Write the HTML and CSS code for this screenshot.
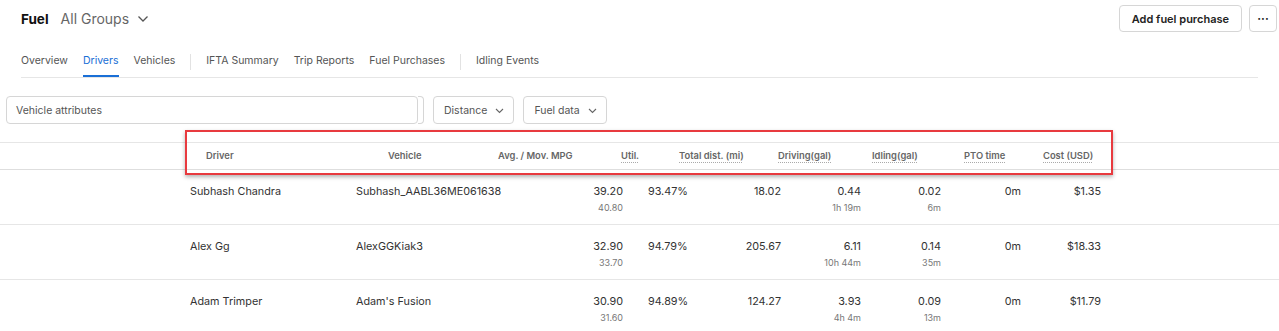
FILE: index.html
```html
<!DOCTYPE html>
<html lang="en">
<head>
    <meta charset="UTF-8">
    <meta name="viewport" content="width=device-width, initial-scale=1.0">
    <title>Fuel - Drivers</title>
    <link rel="stylesheet" href="styles.css">
</head>
<body>
    <div class="topbar">
        <div class="title">
            <span class="page-name">Fuel</span>
            <span class="group-picker">All Groups
                <svg width="12" height="8" viewBox="0 0 12 8"><path d="M1.5 1.5 L6 6 L10.5 1.5" fill="none" stroke="#555" stroke-width="1.3"/></svg>
            </span>
        </div>
        <div class="actions">
            <button class="btn">Add fuel purchase</button>
            <button class="btn btn-more">&middot;&middot;&middot;</button>
        </div>
    </div>

    <nav class="tabs">
        <a class="tab">Overview</a>
        <a class="tab active">Drivers</a>
        <a class="tab">Vehicles</a>
        <span class="tab-sep"></span>
        <a class="tab">IFTA Summary</a>
        <a class="tab">Trip Reports</a>
        <a class="tab">Fuel Purchases</a>
        <span class="tab-sep"></span>
        <a class="tab">Idling Events</a>
    </nav>

    <div class="filters">
        <div class="attr-input">
            <div class="attr-box">Vehicle attributes</div>
            <div class="attr-edge"></div>
        </div>
        <div class="dropdown">Distance
            <svg width="9" height="6" viewBox="0 0 9 6"><path d="M1 1 L4.5 4.5 L8 1" fill="none" stroke="#666" stroke-width="1.1"/></svg>
        </div>
        <div class="dropdown">Fuel data
            <svg width="9" height="6" viewBox="0 0 9 6"><path d="M1 1 L4.5 4.5 L8 1" fill="none" stroke="#666" stroke-width="1.1"/></svg>
        </div>
    </div>

    <div class="table">
        <div class="thead">
            <span>Driver</span>
            <span>Vehicle</span>
            <span>Avg. / Mov. MPG</span>
            <span class="tip">Util.</span>
            <span class="tip">Total dist. (mi)</span>
            <span class="tip">Driving(gal)</span>
            <span class="tip">Idling(gal)</span>
            <span class="tip">PTO time</span>
            <span class="tip">Cost (USD)</span>
        </div>

        <div class="trow">
            <div>Subhash Chandra</div>
            <div>Subhash_AABL36ME061638</div>
            <div class="num">39.20<div class="sub">40.80</div></div>
            <div class="util">93.47%</div>
            <div class="num">18.02</div>
            <div class="num">0.44<div class="sub">1h 19m</div></div>
            <div class="num">0.02<div class="sub">6m</div></div>
            <div class="num">0m</div>
            <div class="num">$1.35</div>
        </div>

        <div class="trow">
            <div>Alex Gg</div>
            <div>AlexGGKiak3</div>
            <div class="num">32.90<div class="sub">33.70</div></div>
            <div class="util">94.79%</div>
            <div class="num">205.67</div>
            <div class="num">6.11<div class="sub">10h 44m</div></div>
            <div class="num">0.14<div class="sub">35m</div></div>
            <div class="num">0m</div>
            <div class="num">$18.33</div>
        </div>

        <div class="trow">
            <div>Adam Trimper</div>
            <div>Adam's Fusion</div>
            <div class="num">30.90<div class="sub">31.60</div></div>
            <div class="util">94.89%</div>
            <div class="num">124.27</div>
            <div class="num">3.93<div class="sub">4h 4m</div></div>
            <div class="num">0.09<div class="sub">13m</div></div>
            <div class="num">0m</div>
            <div class="num">$11.79</div>
        </div>
    </div>

    <!-- highlight drawn over the column headers -->
    <div class="highlight"></div>
</body>
</html>
```

FILE: styles.css
```css
body {
    margin: 0;
    font-family: Inter, "Noto Sans", sans-serif;
    color: #333;
    background-color: #fff;
    position: relative;
    overflow: hidden;
}
.topbar {
    display: flex;
    justify-content: space-between;
    align-items: center;
    padding: 5px 2px 0 21px;
    height: 27px;
}
.title {
    display: flex;
    align-items: center;
    gap: 12px;
}
.page-name {
    font-size: 13.5px;
    font-weight: 700;
    color: #111;
}
.group-picker {
    display: flex;
    align-items: center;
    gap: 8px;
    font-size: 14px;
    color: #666;
}
.actions {
    display: flex;
    gap: 7px;
}
.btn {
    font-family: inherit;
    height: 27px;
    padding: 0 12px;
    font-size: 11px;
    font-weight: 600;
    color: #222;
    background-color: #fff;
    border: 1px solid #d6d6d6;
    border-radius: 4px;
}
.btn-more {
    width: 28px;
    padding: 0;
    font-size: 12px;
}
.tabs {
    display: flex;
    align-items: center;
    gap: 15px;
    margin: 12px 21px 0 21px;
    border-bottom: 1px solid #e6e6e6;
}
.tab {
    font-size: 10.5px;
    line-height: 16px;
    padding: 9px 0 6px;
    color: #555;
    border-bottom: 2px solid transparent;
}
.tab.active {
    color: #1a6fd6;
    border-bottom-color: #1a6fd6;
}
.tab-sep {
    width: 1px;
    height: 16px;
    margin-top: 2px;
    background-color: #e2e2e2;
}
.filters {
    display: flex;
    align-items: center;
    gap: 9px;
    margin: 18px 0 0 6px;
}
.attr-input {
    display: flex;
}
.attr-box {
    width: 401px;
    height: 26px;
    line-height: 27px;
    padding-left: 9px;
    font-size: 10.5px;
    color: #555;
    border: 1px solid #d6d6d6;
    border-radius: 4px;
}
.attr-edge {
    width: 5px;
    height: 26px;
    border: 1px solid #d6d6d6;
    border-left: none;
    border-radius: 0 4px 4px 0;
}
.dropdown {
    display: flex;
    align-items: center;
    gap: 8px;
    height: 25px;
    padding: 1px 9px 0 10px;
    font-size: 10.5px;
    color: #555;
    border: 1px solid #d6d6d6;
    border-radius: 4px;
}
.table {
    margin-top: 18px;
    border-top: 1px solid #e6e6e6;
}
.thead {
    display: grid;
    grid-template-columns: 182px 110px 123px 58px 99px 94px 92px 79px auto;
    padding-left: 206px;
    height: 26px;
    line-height: 26px;
    font-size: 9.4px;
    font-weight: 600;
    color: #666;
    border-bottom: 1px solid #dedede;
}
.thead span {
    justify-self: start;
}
.tip {
    text-decoration: underline dotted #aaa;
    text-underline-offset: 3px;
}
.trow {
    display: grid;
    grid-template-columns: 166px 187px 80px 78px 80px 80px 80px 80px 80px;
    padding-left: 190px;
    height: 39px;
    padding-top: 15px;
    font-size: 10.8px;
    line-height: 14px;
    color: #333;
    border-bottom: 1px solid #e6e6e6;
}
.num {
    text-align: right;
}
.util {
    padding-left: 25px;
}
.sub {
    margin-top: 3px;
    font-size: 9px;
    line-height: 12px;
    color: #777;
}
.highlight {
    position: absolute;
    left: 185px;
    top: 130px;
    width: 924px;
    height: 41px;
    border: 2px solid #e83a3f;
    box-shadow: 0 2px 4px rgba(0, 0, 0, 0.3);
    pointer-events: none;
}
```
